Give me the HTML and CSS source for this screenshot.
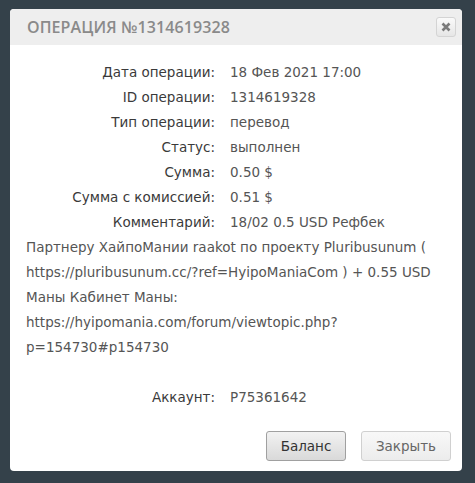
FILE: index.html
```html
<!DOCTYPE html>
<html lang="ru">
<head>
<meta charset="utf-8">
<link rel="stylesheet" href="styles.css">
</head>
<body>
<div class="dialog">
  <div class="header">
    <div class="title">ОПЕРАЦИЯ №1314619328</div>
    <button class="close" aria-label="close"><svg width="10" height="10" viewBox="0 0 10 10"><path d="M1.5 1.5L8.5 8.5M8.5 1.5L1.5 8.5" stroke="#7a7a7a" stroke-width="2.6" stroke-linecap="butt"/></svg></button>
  </div>
  <div class="body">
    <div class="row"><span class="label">Дата операции:</span><span class="value">18 Фев 2021 17:00</span></div>
    <div class="row"><span class="label">ID операции:</span><span class="value">1314619328</span></div>
    <div class="row"><span class="label">Тип операции:</span><span class="value">перевод</span></div>
    <div class="row"><span class="label">Статус:</span><span class="value">выполнен</span></div>
    <div class="row"><span class="label">Сумма:</span><span class="value">0.50 $</span></div>
    <div class="row"><span class="label">Сумма с комиссией:</span><span class="value">0.51 $</span></div>
    <p class="comment"><span class="label">Комментарий:</span>18/02 0.5 USD Рефбек Партнеру ХайпоМании raakot по проекту Pluribusunum ( https://pluribusunum.cc/?ref=HyipoManiaCom ) + 0.55 USD Маны Кабинет Маны: https://hyipomania.com/forum/viewtopic.php?p=154730#p154730</p>
    <div class="row spacer"></div>
    <div class="row"><span class="label">Аккаунт:</span><span class="value">P75361642</span></div>
  </div>
  <div class="footer">
    <button class="btn primary">Баланс</button>
    <button class="btn">Закрыть</button>
  </div>
</div>
</body>
</html>
```
FILE: styles.css
```css
html, body {
  margin: 0;
  padding: 0;
  background: #34414a;
  width: 475px;
  height: 483px;
  overflow: hidden;
}
body {
  padding: 9px 0 0 10px;
  box-sizing: border-box;
}
.dialog {
  width: 452px;
  height: 462px;
  background: #fff;
  border-radius: 4px;
  overflow: hidden;
  display: flex;
  flex-direction: column;
}
.header {
  height: 36px;
  background: #eeeeee;
  display: flex;
  align-items: center;
  justify-content: space-between;
  padding: 0 6px 0 17px;
}
.title {
  font-family: "Open Sans", sans-serif;
  font-weight: 600;
  font-size: 16px;
  letter-spacing: 0.1px;
  color: #8a8a8a;
}
.close {
  width: 20px;
  height: 20px;
  border: 1px solid #d4d4d4;
  border-radius: 3px;
  background: linear-gradient(#fafafa, #e6e6e6);
  padding: 0;
  display: flex;
  align-items: center;
  justify-content: center;
}
.body {
  padding: 15px 16px 0 16px;
  font-family: "DejaVu Sans", sans-serif;
  font-size: 13.5px;
  line-height: 25px;
  color: #555;
}
.row {
  display: flex;
  min-height: 25px;
}
.comment {
  margin: 0;
}
.label {
  display: inline-block;
  width: 189px;
  flex: none;
  text-align: right;
  color: #3a3a3a;
  margin-right: 15px;
}
.value {
  color: #555;
}
.footer {
  display: flex;
  justify-content: flex-end;
  gap: 15px;
  padding: 21px 11px 0 0;
}
.btn {
  font-family: "DejaVu Sans", sans-serif;
  font-size: 13.5px;
  height: 30px;
  padding: 0 12px;
  border-radius: 3px;
  border: 1px solid #d0d0d0;
  background: linear-gradient(#f8f8f8, #ececec);
  color: #666;
  min-width: 90px;
}
.btn.primary {
  min-width: 80px;
  border-color: #a0a0a0;
  background: linear-gradient(#f2f2f2, #d9d9d9);
  color: #333;
}
```
